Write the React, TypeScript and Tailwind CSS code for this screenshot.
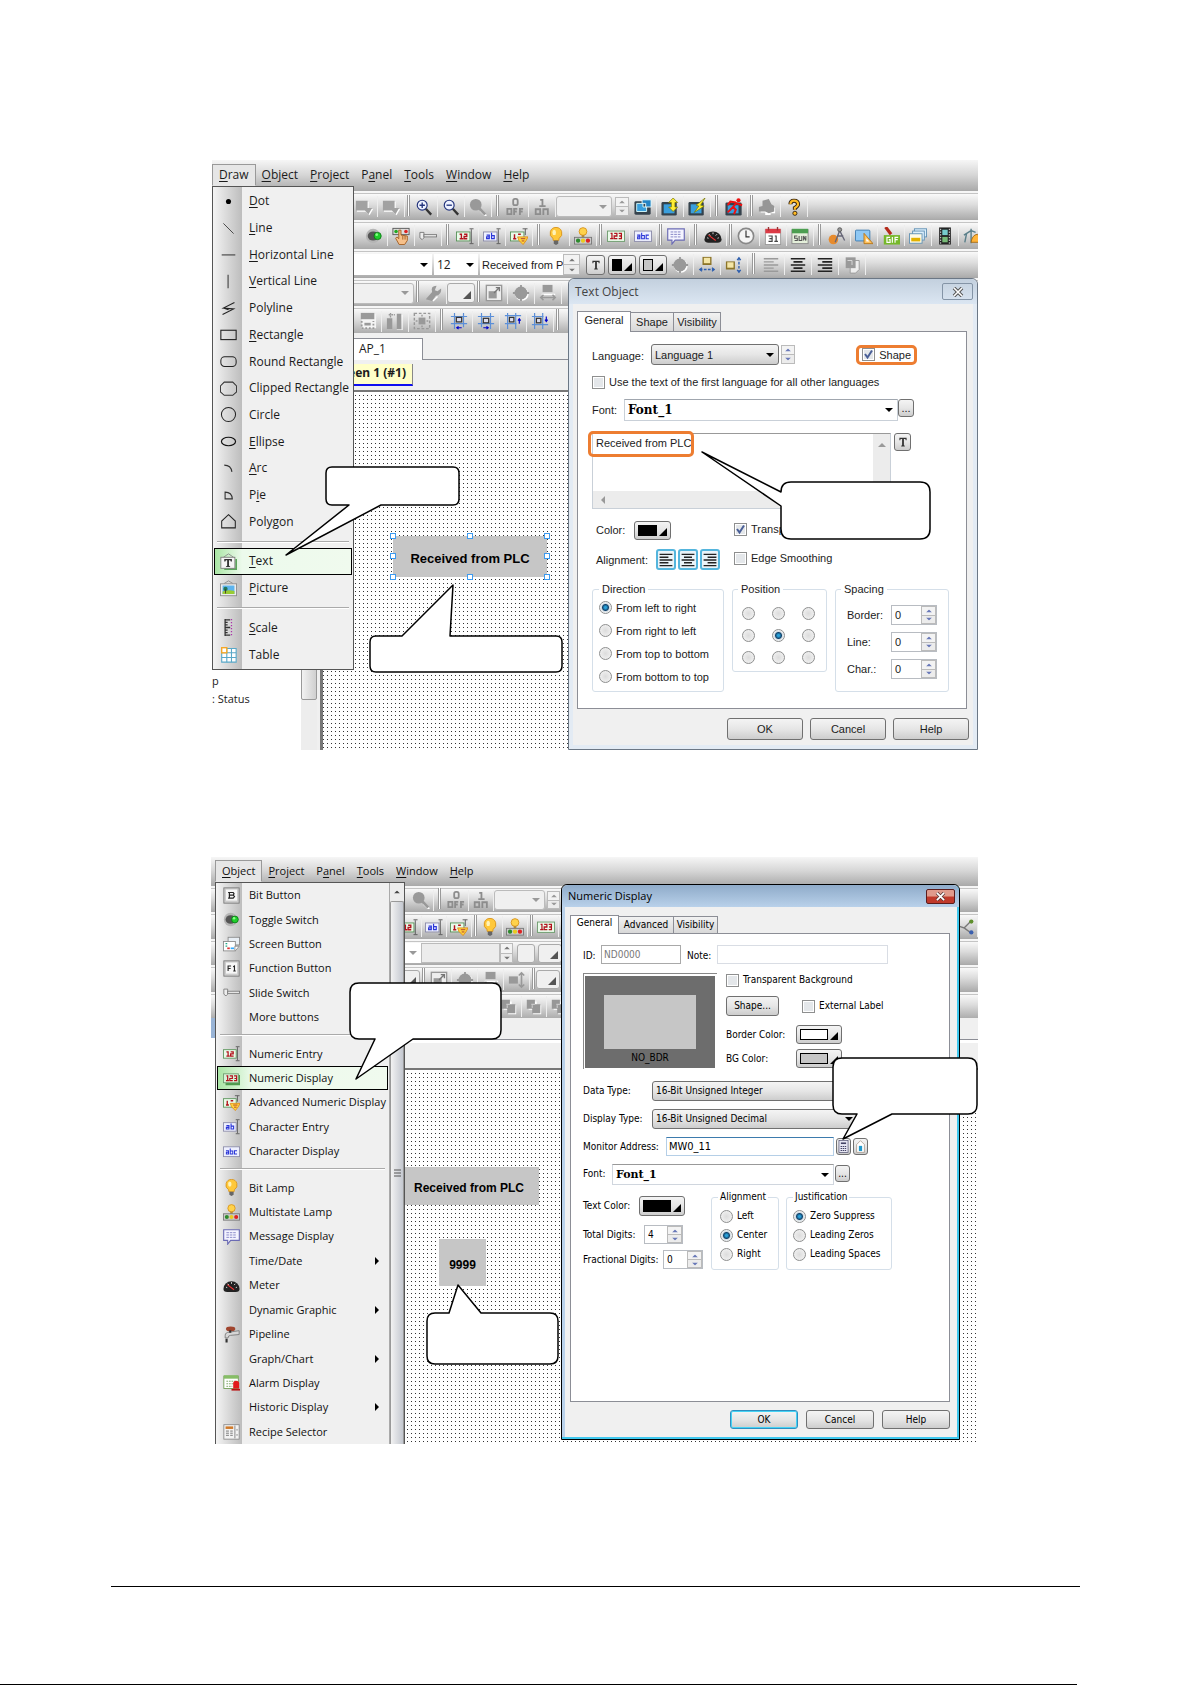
import React from "react";

/* ---------- icons ---------- */

const glyphs: Record<string, React.ReactNode> = {
  dot: <circle cx="10" cy="10" r="3" fill="#000" />,
  line: <path d="M4 4 16 16" stroke="#333" />,
  hline: <path d="M2 10.5H18" stroke="#333" strokeWidth="1.2" />,
  vline: <path d="M9.500 2V18" stroke="#333" strokeWidth="1.2" />,
  polyline: <path d="M17 3 4 9.500 16 10.500 3 17M4 9.500 10 11.500" fill="none" stroke="#222" strokeWidth="1.300" />,
  rect: <rect x="1" y="5" width="18" height="11" fill="none" stroke="#222" strokeWidth="1.300" />,
  roundrect: <rect x="1" y="4.500" width="18" height="11.500" rx="4.500" fill="none" stroke="#222" strokeWidth="1.200" />,
  clipped: <path d="M5 2.500H15L19.500 7V14L15 18H5L.5 14V7Z" fill="none" stroke="#333" strokeWidth="1.200" />,
  circle: <circle cx="10" cy="10" r="8.300" fill="none" stroke="#222" strokeWidth="1.200" />,
  ellipse: <ellipse cx="10" cy="10" rx="8.300" ry="5" fill="none" stroke="#111" strokeWidth="1.400" />,
  arc: <path d="M5 6Q13 6 14 14" fill="none" stroke="#333" strokeWidth="1.300" />,
  pie: <path d="M6 6Q14 6 14.500 14H6Z" fill="none" stroke="#333" strokeWidth="1.300" />,
  polygon: <path d="M10 2 18 9.500V17.500H2V9.500Z" fill="none" stroke="#222" strokeWidth="1.200" />,
  text: (
    <g>
      <path d="M18 7H20V20H5V18H18Z" fill="#5aa55a" />
      <path d="M4 5 10 1 16 5" fill="none" stroke="#888" />
      <rect x="1" y="5" width="16.500" height="13" fill="#f4f4f4" stroke="#777" />
      <path d="M5 7H14V10H12.700L12 8.500H10.600V15L12 15.800V16.600H7V15.800L8.400 15V8.500H7L6.300 10H5Z" fill="#333" />
    </g>
  ),
  picture: (
    <g>
      <path d="M5 4 10 1 15 4" fill="none" stroke="#888" />
      <rect x=".5" y="4.500" width="19" height="14" fill="#eee" stroke="#888" />
      <rect x="3" y="6.500" width="14" height="10" fill="#5db4ee" />
      <path d="M3 13.500Q10 11 17 13V16.500H3Z" fill="#9c3" />
      <circle cx="6.500" cy="10.500" r="2.500" fill="#275" />
      <path d="M6 11H7V16H6Z" fill="#432" />
    </g>
  ),
  scale: (
    <g stroke="#333" strokeWidth="1.500">
      <path d="M6 0V20M6 1H12M6 4H9M6 7H9M6 10H12M6 13H9M6 16H9M6 19H12" />
      <path d="M13.500 0V20" stroke="#a3a" strokeDasharray="1.500 2" />
    </g>
  ),
  table: (
    <g>
      <path d="M2 3H19V19H2Z" fill="#fff" stroke="#59a8c8" strokeWidth="1.300" />
      <path d="M8 3V19M13.500 3V19M2 8H19M2 13.500H19" stroke="#59a8c8" strokeWidth="1.300" />
      <rect x="2" y="2" width="6" height="6" fill="#fff" stroke="#f5a623" strokeWidth="1.600" />
    </g>
  ),
  zoomin: (
    <g>
      <path d="M12 12 18 18.500" stroke="#333" strokeWidth="2.600" />
      <circle cx="8" cy="8" r="5.500" fill="#eef2ff" stroke="#24357e" strokeWidth="1.300" />
      <path d="M8 5V11M5 8H11" stroke="#24357e" strokeWidth="1.500" />
    </g>
  ),
  zoomout: (
    <g>
      <path d="M12 12 18 18.500" stroke="#333" strokeWidth="2.600" />
      <circle cx="8" cy="8" r="5.500" fill="#eef2ff" stroke="#24357e" strokeWidth="1.300" />
      <path d="M5 8H11" stroke="#24357e" strokeWidth="1.500" />
    </g>
  ),
  zoomgray: (
    <g>
      <path d="M13 14 19 20" stroke="#fff" strokeWidth="2.500" />
      <path d="M11 11 18 18.500" stroke="#999" strokeWidth="3" />
      <circle cx="7.500" cy="7.500" r="6.500" fill="#999" />
    </g>
  ),
  off: (
    <g fill="none" stroke="#8d8d8d" strokeWidth="2">
      <rect x="8" y="1" width="5" height="7" rx="2" />
      <path d="M1.500 12H6V18H1.500ZM9 19V12H12.500M9 15H12M15.500 19V12H19M15.500 15H18.500" />
    </g>
  ),
  on: (
    <g fill="none" stroke="#8d8d8d" strokeWidth="2">
      <path d="M8 2H10.500V9M7 9H14M3 12.500H8V18H3ZM11.500 19V12.500H16.500V19" />
    </g>
  ),
  grayA: (
    <g>
      <path d="M1 3H14V11H19L15 18 11 14H1Z" fill="#fff" transform="translate(1.200 1.200)" />
      <path d="M1 3H14V11H19L15 18 11 14H1Z" fill="#a2a2a2" />
    </g>
  ),
  grayB: (
    <g>
      <rect x="3" y="2" width="16" height="16" fill="#f4f4f4" />
      <rect x="2" y="1" width="15" height="7" fill="#999" />
      <path d="M3 10V18H16V10" stroke="#999" strokeWidth="2" strokeDasharray="2 2" fill="none" />
      <path d="M6 12H13V15H6Z" fill="#999" />
    </g>
  ),
  grayC: (
    <g fill="#999">
      <path d="M1 7H7V19H1ZM12 2H17V19H12Z" />
      <path d="M3 3H10M5 1V6" stroke="#999" strokeDasharray="2 1" strokeWidth="1.500" />
      <path d="M18 3V20H12" fill="none" stroke="#fff" />
    </g>
  ),
  grayD: (
    <g fill="none" stroke="#999" strokeWidth="1.600">
      <rect x="1.500" y="1.500" width="17" height="17" strokeDasharray="3 2" />
      <rect x="7" y="7" width="6" height="6" fill="#999" />
      <path d="M10 3V17M3 10H17" strokeDasharray="2 2" />
    </g>
  ),
  grayE: (
    <g>
      <rect x="1.500" y="1.500" width="17" height="17" fill="#eee" stroke="#999" strokeWidth="1.500" />
      <rect x="4" y="8" width="9" height="8" fill="#999" />
      <path d="M10 10 16 4M12 4H16V8" stroke="#777" fill="none" strokeWidth="1.500" />
    </g>
  ),
  grayCircle: (
    <g>
      <circle cx="11" cy="11" r="7.500" fill="#fff" />
      <circle cx="10" cy="10" r="7.200" fill="#999" />
      <path d="M10 1V19M1 10H19" stroke="#999" strokeWidth="2" />
    </g>
  ),
  grayW: (
    <g>
      <rect x="4" y="1" width="11" height="8" fill="#999" />
      <path d="M3 11.500H18" stroke="#fff" strokeWidth="1.500" />
      <path d="M2 15H18M5 12 2 15 5 18M15 12 18 15 15 18" fill="none" stroke="#999" strokeWidth="1.800" />
    </g>
  ),
  grayH: (
    <g>
      <rect x="1" y="6" width="10" height="8" fill="#999" />
      <path d="M15 2V18M12 5 15 2 18 5M12 15 15 18 18 15" fill="none" stroke="#999" strokeWidth="1.800" />
    </g>
  ),
  graySq: (
    <g>
      <path d="M3 3H12V7H17V17H8V12H3Z" fill="#fff" transform="translate(1 1)" />
      <path d="M2 2H11V7H17V17H8V12H2Z" fill="#979797" />
      <path d="M7 7H11M8 8V11" stroke="#ddd" />
    </g>
  ),
  wrench: (
    <g>
      <path d="M2 17 9 9Q7 2 14 2L12 7 15 8 19 5Q20 12 13 13L9 19Z" fill="#999" />
      <path d="M10 19 15 14" stroke="#fff" strokeWidth="1.500" />
    </g>
  ),
  screens: (
    <g>
      <rect x=".5" y="3.500" width="18" height="15" rx="1.500" fill="#35424c" />
      <path d="M3 6H10V10H14V15H3Z" fill="#3a9fdd" stroke="#dff" />
      <path d="M9 2H19V10H13V6H9Z" fill="#2383c4" stroke="#eff" />
    </g>
  ),
  screenUp: (
    <g>
      <rect x=".5" y="4.500" width="17" height="15" rx="1.500" fill="#35424c" />
      <rect x="3" y="7" width="12" height="10" fill="#3a9fdd" />
      <path d="M13.500 0 18.500 5H15.500V10H18.500L13.500 15 8.500 10H11.500V5H8.500Z" fill="#fe3" stroke="#770" strokeWidth=".8" />
    </g>
  ),
  screenFlash: (
    <g>
      <rect x=".5" y="4.500" width="17" height="15" rx="1.500" fill="#35424c" />
      <rect x="3" y="7" width="12" height="10" fill="#3a9fdd" />
      <path d="M19 0 9 8 12 9 7 16 18 9 14 8Z" fill="#fe3" stroke="#770" strokeWidth=".8" />
    </g>
  ),
  run: (
    <g>
      <rect x=".5" y="5" width="18" height="14.500" rx="1.500" fill="#35424c" />
      <rect x="3" y="8" width="12" height="9" fill="#3a9fdd" />
      <circle cx="15" cy="2.500" r="2.300" fill="#e11" />
      <path d="M13 5 9 10 12 13 10 18M9 10 3 16M13 6 19 8M12 5 6 4 3 8" stroke="#e11" strokeWidth="2.200" fill="none" />
    </g>
  ),
  printer: (
    <g>
      <path d="M2 11 6 9V4L12 2 15 8 18 10V16H13V18H7V15H2Z" fill="#fff" transform="translate(1 1)" />
      <path d="M1 10 5 9V3L12 1 15 7 18 9V15L12 17 8 15H1Z" fill="#969696" />
    </g>
  ),
  help: (
    <g>
      <path d="M6 7Q6 3 10 3 14.500 3 14.500 7 14.500 9 11 11V13" fill="none" stroke="#321" strokeWidth="4.500" />
      <path d="M6 7Q6 3 10 3 14.500 3 14.500 7 14.500 9 11 11V13" fill="none" stroke="#fb2" strokeWidth="2.400" />
      <circle cx="11" cy="17" r="2.300" fill="#fb2" stroke="#321" />
    </g>
  ),
  toggle: (
    <g>
      <circle cx="9" cy="10" r="8" fill="#b5b5b5" />
      <ellipse cx="9" cy="10" rx="6" ry="5" fill="#555" />
      <circle cx="14" cy="10" r="4" fill="#1fce2b" stroke="#0a7a14" />
      <circle cx="13" cy="8.500" r="1.500" fill="#8f8" />
    </g>
  ),
  hand: (
    <g>
      <rect x="1" y="1.500" width="18" height="7" fill="#ddd" stroke="#555" />
      <circle cx="4.500" cy="5" r="2" fill="#2a2" />
      <circle cx="15.500" cy="5" r="2" fill="#d22" />
      <path d="M7.500 3.500H10V9L17 10V15L14 19.500H8L4 12.500 5.500 11 7.500 13Z" fill="#f6c08a" stroke="#a05a1e" />
      <path d="M12 10V14M14.500 10V14" stroke="#a05a1e" />
    </g>
  ),
  slide: (
    <g fill="#eee" stroke="#777">
      <path d="M1 6H5.500V12L3.500 14 1 12Z" />
      <rect x="5.500" y="8.500" width="14" height="2.500" />
    </g>
  ),
  numEntry: (
    <g>
      <rect x=".5" y="5.500" width="15" height="10" fill="#eafbea" stroke="#579157" />
      <path d="M4 8H6V13M4 13H8M9 8H12V10.500H9V13H12.500" fill="none" stroke="#b3121d" strokeWidth="1.500" />
      <path d="M17 2.500V18M15 2H19.500M15 18.500H19.500" stroke="#555" />
    </g>
  ),
  numDisplay: (
    <g>
      <rect x=".5" y="4.500" width="19" height="11.500" fill="#eafbea" stroke="#6c9a6c" />
      <path d="M4 7H5.500V13M3.500 13H7M8 7H11V10H8V13H11.500M13 7H16V13H13M13.500 10H16" fill="none" stroke="#b3121d" strokeWidth="1.400" />
    </g>
  ),
  numDisplayHot: (
    <g>
      <path d="M18 6H20V18H3V15H18Z" fill="#4e9a4e" />
      <rect x=".5" y="4.500" width="17.500" height="10.500" fill="#d8f3d8" stroke="#6c9a6c" />
      <path d="M4 7H5.500V12.500M3.500 12.500H7M8 7H11V10H8V12.500H11.500M13 7H16V12.500H13M13.500 10H16" fill="none" stroke="#b3121d" strokeWidth="1.400" />
    </g>
  ),
  advNum: (
    <g>
      <rect x=".5" y="5.500" width="15" height="10" fill="#eafbea" stroke="#579157" />
      <path d="M5 8V13M3.500 13H7M9 8H12" fill="none" stroke="#b3121d" strokeWidth="1.600" />
      <path d="M17 2V9M14 2H19.500" stroke="#555" />
      <path d="M8.500 11H20L18 15 14.500 19.500 10 15Z" fill="#ffd43b" stroke="#e08a1a" />
      <path d="M12 13H17M13 15.500H16" stroke="#a33" />
    </g>
  ),
  ab: (
    <g>
      <rect x=".5" y="5.500" width="15" height="10" fill="#eef0ff" stroke="#8a8aa8" />
      <path d="M4 9H7V13H4V11H7M9.500 6.500V13H12.500V9.500H9.500" fill="none" stroke="#2b36d8" strokeWidth="1.300" />
      <path d="M17 2.500V18M15 2H19.500M15 18.500H19.500" stroke="#555" />
    </g>
  ),
  abc: (
    <g>
      <rect x=".5" y="4.500" width="19" height="11.500" fill="#eef0ff" stroke="#8a8aa8" />
      <path d="M3.500 9H6.500V13H4V11H6.500M8.500 6.500V13H11.500V9.500H8.500M16.500 9H13.500V13H16.500" fill="none" stroke="#2b36d8" strokeWidth="1.200" />
    </g>
  ),
  lamp: (
    <g>
      <path d="M10 .5A6.500 6.500 0 0 1 13.500 12.500L13 15H7L6.500 12.500A6.500 6.500 0 0 1 10 .5Z" fill="#ffc83a" stroke="#d8931a" />
      <ellipse cx="8" cy="6" rx="2" ry="3" fill="#fff3b8" />
      <path d="M7.500 15H12.500V18.500L10 20 7.500 18.500Z" fill="#666" />
    </g>
  ),
  multi: (
    <g>
      <circle cx="10" cy="5" r="4.300" fill="#ffd24a" stroke="#d8931a" />
      <path d="M8.500 9H11.500V12H8.500Z" fill="#b98a30" />
      <rect x=".5" y="11.500" width="19" height="7.500" fill="#ccc" stroke="#777" />
      <circle cx="4.500" cy="15.200" r="2.400" fill="#2d8a2d" />
      <circle cx="10" cy="15.200" r="2.400" fill="#eaca20" />
      <circle cx="15.500" cy="15.200" r="2.400" fill="#d22" />
    </g>
  ),
  msg: (
    <g>
      <path d="M.8 2H19.200V14.500H9L5.500 19V14.500H.8Z" fill="#f4f4ff" stroke="#6b6bb4" strokeWidth="1.300" />
      <path d="M4 5.500H16M4 8.200H16M4 11H16" stroke="#7a7ac0" strokeDasharray="3 1" />
    </g>
  ),
  meter: (
    <g>
      <path d="M.5 14A9.500 9 0 0 1 19.500 14Q19.500 17.500 15 17.500H5Q.5 17.500 .5 14Z" fill="#222" />
      <path d="M3.500 12 5 12.500M5.500 8 7 9.500M10 6V8M14.500 8 13 9.500M16.500 12 15 12.500" stroke="#eee" />
      <path d="M5 9 13 15" stroke="#e33" strokeWidth="1.200" />
    </g>
  ),
  clock: (
    <g>
      <circle cx="10" cy="10" r="8.500" fill="#f5f5f5" stroke="#888" strokeWidth="1.800" />
      <path d="M10 4V11H14" fill="none" stroke="#333" strokeWidth="1.300" />
    </g>
  ),
  cal: (
    <g>
      <rect x="1.500" y="3" width="17" height="16.500" fill="#fff" stroke="#999" />
      <rect x="1.500" y="2" width="17" height="5" fill="#dc3b46" />
      <path d="M5 0V4M15 0V4" stroke="#933" strokeWidth="1.500" />
      <path d="M5 10H9V16H5M6 13H9M12 10H13.500V16M11.500 16H15.500" fill="none" stroke="#444" strokeWidth="1.300" />
    </g>
  ),
  sun: (
    <g>
      <rect x="1" y="3" width="18" height="15.500" fill="#e4efda" stroke="#888" />
      <rect x="1" y="2" width="18" height="5" fill="#4c9e50" />
      <path d="M7 10H4V12.500H7V15H4M9 10V15H12V10M14 15V10L16.500 15V10" fill="none" stroke="#555" strokeWidth="1.200" />
    </g>
  ),
  compass: (
    <g>
      <circle cx="6" cy="14" r="5.300" fill="#e78b2d" />
      <path d="M13 4 8 17M13 4 18.500 15M10 10H17" fill="none" stroke="#667" strokeWidth="1.500" />
      <circle cx="13" cy="3" r="2.200" fill="#999" stroke="#555" />
    </g>
  ),
  draw: (
    <g>
      <rect x=".5" y="3.500" width="16" height="12" rx="1" fill="#8fc8f4" stroke="#3878b0" />
      <path d="M10 7V18.500H20Z" fill="#ffc15a" stroke="#b37418" />
      <path d="M12.500 12.500V16H16Z" fill="#fff" />
    </g>
  ),
  gif: (
    <g>
      <path d="M4 0 10 8" stroke="#b42a1a" strokeWidth="3.500" />
      <rect x="2" y="9" width="18" height="10.500" fill="#76b82a" />
      <path d="M9 11.500H5.500V17H9V14H7.500M11.500 11V17.500M14.500 17.500V11.500H18M14.500 14H17.500" fill="none" stroke="#fff" strokeWidth="1.300" />
    </g>
  ),
  photos: (
    <g>
      <rect x="6" y="2" width="13.500" height="9" fill="#dceffc" stroke="#5e8fb3" />
      <rect x="4" y="4.500" width="13" height="10" fill="#dceffc" stroke="#5e8fb3" />
      <rect x=".5" y="7.500" width="14" height="10.500" fill="#fffbe6" stroke="#5e8fb3" />
      <path d="M2.500 12H12.500V16H2.500Z" fill="#e2b200" />
    </g>
  ),
  film: (
    <g>
      <rect x="3.500" y=".5" width="13" height="19" fill="#222" />
      <rect x="7" y="3" width="6" height="6" fill="#7cc" />
      <rect x="7" y="11" width="6" height="6" fill="#7b7" />
      <path d="M5.200 2V19M14.800 2V19" stroke="#fff" strokeDasharray="1.500 1.500" />
    </g>
  ),
  tools: (
    <g>
      <path d="M1 9 9 4 14 6M9 2V18M4 7 2 17" stroke="#5a7f8a" strokeWidth="1.600" fill="none" />
      <path d="M9 17Q10 9 16 8L19 12V17Z" fill="#ffb43a" stroke="#a66a10" />
    </g>
  ),
  net: (
    <g>
      <path d="M3 9 9 11 17 3M9 11 17 17" stroke="#777" fill="none" strokeWidth="1.500" />
      <circle cx="17" cy="4" r="2.400" fill="#5f8f2e" />
      <circle cx="17" cy="16" r="2.400" fill="#3a5fae" />
    </g>
  ),
  boxW: (
    <g>
      <rect x="5" y="1" width="10" height="9" fill="#8c7428" />
      <rect x="6.500" y="2" width="7" height="6" fill="#f4e6a6" />
      <path d="M2 15H18" stroke="#2d5eae" strokeDasharray="3 1.500" strokeWidth="1.500" />
      <path d="M4.500 13 2 15 4.500 17M15.500 13 18 15 15.500 17" fill="none" stroke="#2d5eae" strokeWidth="1.400" />
    </g>
  ),
  boxH: (
    <g>
      <rect x="1" y="6" width="10" height="9" fill="#8c7428" />
      <rect x="2.500" y="7" width="7" height="6" fill="#f4e6a6" />
      <path d="M15.500 2V18" stroke="#2d5eae" strokeDasharray="3 1.500" strokeWidth="1.500" />
      <path d="M13.500 4.500 15.500 2 17.500 4.500M13.500 15.500 15.500 18 17.500 15.500" fill="none" stroke="#2d5eae" strokeWidth="1.400" />
    </g>
  ),
  alignLeft: <path d="M2 3H18M2 6.500H13M2 10H18M2 13.500H13M2 17H18" stroke="#9a9a9a" strokeWidth="1.600" />,
  alignCenter: <path d="M2 3H18M5 6.500H15M2 10H18M5 13.500H15M2 17H18" stroke="#222" strokeWidth="1.800" />,
  alignRight: <path d="M2 3H18M7 6.500H18M2 10H18M7 13.500H18M2 17H18" stroke="#222" strokeWidth="1.800" />,
  alignLeftDark: <path d="M2 3H18M2 6.500H13M2 10H18M2 13.500H13M2 17H18" stroke="#222" strokeWidth="1.800" />,
  pages: (
    <g>
      <path d="M8 5H18V15L14 19H8Z" fill="#eee" stroke="#999" />
      <rect x="3" y="1.500" width="11" height="12" fill="#999" />
      <path d="M5 5H10V10" stroke="#ddd" fill="none" />
    </g>
  ),
  gridL: (
    <g>
      <path d="M5 1V19M15 1V17M1 5H19M1 13H19" stroke="#5b8fd8" strokeWidth="1.300" />
      <rect x="7" y="6" width="6" height="5" fill="#dde" stroke="#333" strokeWidth="1.400" />
      <path d="M13 17.500H8M9.500 16 7.500 17.500 9.500 19" fill="none" stroke="#00c" strokeWidth="1.300" />
    </g>
  ),
  gridR: (
    <g>
      <path d="M5 1V17M15 1V19M1 5H19M1 13H19" stroke="#5b8fd8" strokeWidth="1.300" />
      <rect x="7" y="7" width="6" height="5" fill="#dde" stroke="#333" strokeWidth="1.400" />
      <path d="M7 17.500H12M10.500 16 12.500 17.500 10.500 19" fill="none" stroke="#00c" strokeWidth="1.300" />
    </g>
  ),
  gridU: (
    <g>
      <path d="M4 1V19M13 1V19M1 4H19M1 13H14" stroke="#5b8fd8" strokeWidth="1.300" />
      <rect x="6" y="6" width="5" height="5" fill="#dde" stroke="#333" strokeWidth="1.400" />
      <path d="M17 13V8M15.500 9.500 17 7.500 18.500 9.500" fill="none" stroke="#00c" strokeWidth="1.300" />
    </g>
  ),
  gridD: (
    <g>
      <path d="M4 1V19M13 1V19M1 5H14M1 14H19" stroke="#5b8fd8" strokeWidth="1.300" />
      <rect x="6" y="7" width="5" height="5" fill="#dde" stroke="#333" strokeWidth="1.400" />
      <path d="M17 5V10M15.500 8.500 17 10.500 18.500 8.500" fill="none" stroke="#00c" strokeWidth="1.300" />
    </g>
  ),
  bitButton: (
    <g>
      <rect x="1" y="1" width="18" height="18" fill="#ccc" stroke="#777" />
      <rect x="3.500" y="3" width="13" height="13" fill="#f6f6f6" />
      <path d="M7.500 6.500V13M6 6.500H12L13 8 12 9.600H7.500M12 9.600 13.500 11.300 12 13H6" fill="none" stroke="#222" strokeWidth="1.400" />
    </g>
  ),
  fnButton: (
    <g>
      <rect x="1" y="1" width="18" height="18" fill="#ccc" stroke="#777" />
      <rect x="3.500" y="3" width="13" height="13" fill="#f6f6f6" />
      <path d="M6 13V7H9.500M6 10H9M12 8 13.500 7V13M12 13H15" fill="none" stroke="#222" strokeWidth="1.300" />
    </g>
  ),
  screenButton: (
    <g>
      <rect x="6" y="1.500" width="13.500" height="9" fill="#e8eef4" stroke="#888" />
      <rect x=".5" y="6.500" width="14" height="11" fill="#fff" stroke="#888" />
      <path d="M3 9H5M3 12H5" stroke="#2a8" strokeWidth="1.500" />
      <path d="M5 14.500H8" stroke="#d33" strokeWidth="2" />
      <path d="M9 14.500H13" stroke="#3af" strokeWidth="2" />
      <path d="M14 12H19L15 17H14Z" fill="#fff" stroke="#888" />
    </g>
  ),
  pipeline: (
    <g>
      <ellipse cx="9" cy="3.500" rx="5.500" ry="2.800" fill="#a0452e" />
      <path d="M3 9Q5 7 9 7L19 5.500V10L9 11Q6 11 6 14H2.500Q2.500 10 3 9Z" fill="#d6d6d6" stroke="#777" />
      <path d="M8.500 5V8M4.200 15V19.500" stroke="#333" strokeWidth="2.500" />
    </g>
  ),
  alarm: (
    <g>
      <rect x="1" y="2.500" width="17" height="14.500" fill="#fff" stroke="#6b9a4f" />
      <rect x="1" y="1.500" width="17" height="4" fill="#86bd66" />
      <path d="M4 8.500H15M4 11.500H12M4 14.500H11" stroke="#6b9a4f" strokeDasharray="2 1" />
      <path d="M12 17V11Q12 8 15.500 8 19 8 19 11V17Z" fill="#e31b1b" />
      <path d="M10 18.500H20" stroke="#b11" strokeWidth="2" />
    </g>
  ),
  recipe: (
    <g>
      <rect x="1" y="2" width="18" height="17" fill="#f3f3f3" stroke="#888" />
      <rect x="3" y="4" width="9" height="3" fill="#cf7a2a" />
      <path d="M3.500 9.500H7M3.500 12H7M3.500 14.500H7M8.500 9.500H11.500M8.500 12H11.500M8.500 14.500H11.500" stroke="#666" />
      <path d="M14 3V18M16.500 7V9M16.500 13V15" stroke="#777" />
    </g>
  ),
  keypad: (
    <g>
      <rect x="3" y="1" width="14" height="18" fill="#e8e8f4" stroke="#446" />
      <path d="M6 5H14" stroke="#446" strokeWidth="2.500" />
      <path d="M5.500 10H14.500M5.500 13H14.500M5.500 16H14.500" stroke="#446" strokeWidth="1.600" strokeDasharray="2.200 1" />
    </g>
  ),
  tag: (
    <g>
      <path d="M4 19V7L10 1 16 7V19Z" fill="#fff" stroke="#987" />
      <path d="M7.500 9H12.500V17H7.500Z" fill="#29c" />
    </g>
  ),
  T: <path d="M4 3H16V7H14.500L14 5H11.500V15.500L13 16.200V17.500H7V16.200L8.500 15.500V5H6L5.500 7H4Z" fill="#333" />,
};

function Icon({ name, className = "size-[18px]" }: { name: string; className?: string }) {
  return (
    <svg viewBox="0 0 20 20" className={`shrink-0 ${className}`} aria-hidden="true">
      {glyphs[name]}
    </svg>
  );
}

const Arrow = ({ up = false, className = "text-black" }: { up?: boolean; className?: string }) => (
  <svg viewBox="0 0 8 4" className={`h-1 w-2 ${className}`} aria-hidden="true">
    <path d={up ? "M0 4 4 0 8 4Z" : "M0 0H8L4 4Z"} fill="currentColor" />
  </svg>
);

/* ---------- form controls ---------- */

function Check({ label, checked = false }: { label: string; checked?: boolean }) {
  return (
    <label className="flex items-center gap-1 whitespace-nowrap">
      <span className="grid size-[13px]">
        <input
          type="checkbox"
          defaultChecked={checked}
          className="peer size-[13px] appearance-none border border-[#8e8f8f] bg-[#e4e7ea] shadow-[inset_0_0_0_1px_#fff] [grid-area:1/1]"
        />
        <svg viewBox="0 0 13 13" className="pointer-events-none hidden size-[13px] peer-checked:block [grid-area:1/1]" aria-hidden="true">
          <path d="M3 6 5.500 9.500 10 2.500" fill="none" stroke="#4a5f97" strokeWidth="2" />
        </svg>
      </span>
      {label}
    </label>
  );
}

const radioFace =
  "size-[13px] appearance-none rounded-full border border-[#8e8f8f] bg-[radial-gradient(#dcdcdc,#f6f6f6)] checked:bg-[radial-gradient(#2aa0d8_1px,#12456e_3px,#d5dde3_4px,#fff_6px)]";

function Radio({ name, label, checked = false }: { name: string; label: string; checked?: boolean }) {
  return (
    <label className="flex items-center gap-1 whitespace-nowrap">
      <input type="radio" name={name} defaultChecked={checked} className={radioFace} />
      {label}
    </label>
  );
}

function Spin({ className = "h-full w-[14px]", tone = "text-[#6878b8]", label }: { className?: string; tone?: string; label: string }) {
  return (
    <span className={`flex flex-col ${className}`}>
      <button aria-label={`${label} up`} className="flex min-h-0 flex-1 items-center justify-center border border-[#bbb] bg-[#f3f3f3]">
        <Arrow up className={`${tone} scale-75`} />
      </button>
      <button aria-label={`${label} down`} className="flex min-h-0 flex-1 items-center justify-center border border-t-0 border-[#bbb] bg-[#ececec]">
        <Arrow className={`${tone} scale-75`} />
      </button>
    </span>
  );
}

function NumberBox({ label, value, className }: { label: string; value: string; className: string }) {
  return (
    <span className={`flex border border-[#b8bcc2] bg-white ${className}`}>
      <input aria-label={label} defaultValue={value} className="w-0 min-w-0 flex-1 pl-[3px]" />
      <Spin label={label} className="w-[15px]" />
    </span>
  );
}

function Combo({ label, value, className, arrow = "text-black" }: { label: string; value: string; className: string; arrow?: string }) {
  return (
    <span className={`grid items-center ${className}`}>
      <select aria-label={label} className="h-full w-full appearance-none truncate pl-[3px] [grid-area:1/1]">
        <option>{value}</option>
      </select>
      <span className="pointer-events-none mr-1 justify-self-end [grid-area:1/1]">
        <Arrow className={arrow} />
      </span>
    </span>
  );
}

const face = "border border-[#707070] rounded-[3px] bg-linear-to-b from-[#f4f4f4] via-[#e6e6e6] to-[#cdcdcd]";

function Swatch({ label, className, color }: { label: string; className: string; color: string }) {
  return (
    <button aria-label={label} className={`flex items-end justify-between p-[3px] ${face} ${className}`}>
      <span className={`h-full flex-1 border border-black ${color}`} />
      <svg viewBox="0 0 8 8" className="ml-[2px] size-2" aria-hidden="true">
        <path d="M8 0V8H0Z" fill="#000" />
      </svg>
    </button>
  );
}

function Push({ children, className }: { children: React.ReactNode; className: string }) {
  return <button className={`${face} ${className}`}>{children}</button>;
}

function Tabs({ items, className }: { items: [string, string][]; className: string }) {
  return (
    <div role="tablist" className={`flex items-end ${className}`}>
      {items.map(([t, w], i) => (
        <button
          key={t}
          role="tab"
          aria-selected={i === 0}
          className={
            i === 0
              ? `z-10 -mb-px h-full border border-b-0 border-[#8c8e96] bg-white pb-1 ${w}`
              : `h-[calc(100%-2px)] border border-b-0 border-l-0 border-[#8c8e96] bg-linear-to-b from-[#f2f2f2] to-[#d8d8d8] ${w}`
          }
        >
          {t}
        </button>
      ))}
    </div>
  );
}

/* ---------- menus ---------- */

function Mnemonic({ text }: { text: string }) {
  const at = text.indexOf("&");
  if (at < 0) return <>{text}</>;
  return (
    <>
      {text.slice(0, at)}
      <u className="underline-offset-2">{text[at + 1]}</u>
      {text.slice(at + 2)}
    </>
  );
}

type Item = { t: string; icon?: string; hot?: boolean; sub?: boolean } | "-";

function MenuItems({ items, sep, gap }: { items: Item[]; sep: string; gap: string }) {
  return (
    <>
      {items.map((it, i) =>
        it === "-" ? (
          <div key={i} className={`flex shrink-0 items-center pr-1 pl-1 ${sep}`}>
            <div className="h-[2px] flex-1 border-b border-white bg-[#aaa]" />
          </div>
        ) : (
          <button
            key={i}
            role="menuitem"
            className={`mx-px flex min-h-0 flex-1 items-center border text-left whitespace-nowrap ${
              it.hot ? "border-black bg-linear-to-r from-[#a9e5a4] from-0% via-[#ecfaec] via-20% to-[#f0faee]" : "border-transparent"
            }`}
          >
            <span className="flex w-[26px] shrink-0 justify-center">{it.icon && <Icon name={it.icon} className="size-[17px]" />}</span>
            <span className={`flex-1 ${gap}`}>
              <Mnemonic text={it.t} />
            </span>
            {it.sub && (
              <svg viewBox="0 0 4 8" className="mr-2 h-2 w-1" aria-hidden="true">
                <path d="M0 0 4 4 0 8Z" />
              </svg>
            )}
          </button>
        ),
      )}
    </>
  );
}

function MenuBar({ items, className, pad }: { items: string[]; className: string; pad: string }) {
  return (
    <nav className={`flex items-center bg-linear-to-b from-[#f6f6f6] via-[#d6d6d6] to-[#acacac] ${className}`}>
      {items.map((t, i) => (
        <button key={t} className={`h-[22px] border ${i === 0 ? "border-[#999] border-b-transparent bg-[#e6e6e6] px-[6px]" : `border-transparent ${pad}`}`}>
          <Mnemonic text={t} />
        </button>
      ))}
    </nav>
  );
}

/* ---------- tool bars ---------- */

function ToolRow({ children, className }: { children?: React.ReactNode; className: string }) {
  return (
    <div className={`flex shrink-0 items-center overflow-hidden border-t border-[#aaa] bg-linear-to-b from-[#fafafa] from-10% via-[#dcdcdc] to-[#adadad] shadow-[inset_0_2px_0_#f6f6f6,inset_0_3px_0_#c4c4c4] ${className}`}>
      {children}
    </div>
  );
}

function Tools({ list, size }: { list: string; size: string }) {
  return (
    <>
      {list.split(" ").map((n, i) =>
        n === "|" || n === "||" ? (
          <span key={i} className={`flex shrink-0 justify-center ${n === "|" ? "w-[6px]" : "w-[10px]"}`}>
            <span className="h-[21px] w-[3px] border-x border-[#999] bg-white" />
          </span>
        ) : (
          <button key={i} aria-label={n} className={`mt-[3px] flex h-[21px] shrink-0 items-center justify-center border-r border-[#eee] ${size}`}>
            <Icon name={n} className="size-[18px]" />
          </button>
        ),
      )}
    </>
  );
}

const PenBox = ({ className }: { className: string }) => (
  <button aria-label="Pen colour" className={`mt-[3px] flex shrink-0 items-end justify-end rounded-[3px] border border-[#aaa] bg-[#f0f0f0] p-[3px] ${className}`}>
    <svg viewBox="0 0 8 8" className="size-2" aria-hidden="true">
      <path d="M8 0V8H0Z" fill="#555" />
    </svg>
  </button>
);

/* ---------- call-outs ---------- */

function Callout({ className, box, d }: { className: string; box: string; d: string }) {
  return (
    <svg viewBox={box} className={`absolute overflow-visible ${className}`} aria-hidden="true">
      <path d={d} fill="#fff" stroke="#000" strokeWidth="1.500" strokeLinejoin="round" />
    </svg>
  );
}

const dots =
  "bg-[linear-gradient(#fff_3px,transparent_3px),linear-gradient(90deg,#333_1px,#fff_1px)] bg-[length:4px_4px]";

/* ---------- first figure ---------- */

const drawMenu: Item[] = [
  { t: "&Dot", icon: "dot" },
  { t: "&Line", icon: "line" },
  { t: "&Horizontal Line", icon: "hline" },
  { t: "&Vertical Line", icon: "vline" },
  { t: "Polyline", icon: "polyline" },
  { t: "&Rectangle", icon: "rect" },
  { t: "Round Rectangle", icon: "roundrect" },
  { t: "Clipped Rectangle", icon: "clipped" },
  { t: "Circle", icon: "circle" },
  { t: "&Ellipse", icon: "ellipse" },
  { t: "&Arc", icon: "arc" },
  { t: "P&ie", icon: "pie" },
  { t: "Poly&gon", icon: "polygon" },
  "-",
  { t: "&Text", icon: "text", hot: true },
  { t: "&Picture", icon: "picture" },
  "-",
  { t: "&Scale", icon: "scale" },
  { t: "Table", icon: "table" },
];

function TextObjectDialog() {
  return (
    <div
      role="dialog"
      aria-label="Text Object"
      className="z-10 mt-[118px] w-[410px] self-start justify-self-end rounded-t-md border border-[#6b7785] bg-[#f0f0f0] font-['Liberation_Sans',sans-serif] text-[11px] leading-[14px] text-[#1c1c1c] shadow-[inset_0_0_0_4px_#e3ebf4] [grid-area:1/1]"
    >
      <div className="flex h-[25px] items-center justify-between rounded-t-md bg-linear-to-b from-[#c3d0de] to-[#dbe6f2] pr-1 pl-[6px] font-['Open_Sans',sans-serif] text-xs text-[#444]">
        Text Object
        <button aria-label="Close" className="flex h-[17px] w-[31px] items-center justify-center rounded-[2px] border border-[#8494a6]">
          <svg viewBox="0 0 12 10" className="h-[10px] w-3" aria-hidden="true">
            <path d="M2 1 10 9M10 1 2 9" stroke="#555" strokeWidth="3.600" />
            <path d="M2 1 10 9M10 1 2 9" stroke="#fff" strokeWidth="1.600" />
          </svg>
        </button>
      </div>
      <div className="px-2 pt-[6px] pb-[9px]">
        <Tabs className="h-[21px]" items={[["General", "w-[54px]"], ["Shape", "w-[43px]"], ["Visibility", "w-[47px]"]]} />
        <div className="mr-[2px] border border-[#8c8e96] bg-white pt-3 pb-4 pl-[14px]">
          <div className="flex h-[21px] items-center">
            <span className="w-[59px] pt-[2px]">Language:</span>
            <Combo label="Language" value="Language 1" className={`h-[21px] w-[128px] ${face}`} />
            <Spin label="Language" className="ml-[2px] h-[19px] w-[14px]" />
            <div className="mr-[49px] ml-auto rounded-[5px] border-[3px] border-[#ed7d31] px-[3px]">
              <Check label="Shape" checked />
            </div>
          </div>
          <div className="mt-2 flex h-[18px] items-center">
            <Check label="Use the text of the first language for all other languages" />
          </div>
          <div className="mt-2 flex h-[22px] items-start">
            <span className="w-8 pt-1">Font:</span>
            <Combo label="Font" value="Font_1" className="h-[22px] w-[274px] border border-[#c9d0d8] border-t-[#a0a6ae] bg-white font-['DejaVu_Serif',serif] text-xs font-bold text-black" />
            <Push className="h-[18px] w-4">...</Push>
          </div>
          <div className="mt-3 flex items-start">
            <div className="relative flex h-[76px] w-[299px] flex-col border border-[#c9d0d8] border-t-[#999]">
              <div className="flex min-h-0 flex-1">
                <textarea aria-label="Text" defaultValue="Received from PLC" className="min-w-0 flex-1 resize-none overflow-hidden pt-[2px] pl-[3px]" />
                <div className="flex w-[17px] justify-center bg-[#ececec] pt-[9px]">
                  <Arrow up className="text-[#999]" />
                </div>
              </div>
              <div className="flex h-[17px] items-center bg-[#ececec] pl-2">
                <svg viewBox="0 0 4 8" className="h-2 w-1" aria-hidden="true">
                  <path d="M4 0V8L0 4Z" fill="#999" />
                </svg>
              </div>
              <div className="absolute -top-[3px] -left-[5px] h-[26px] w-[106px] rounded-[5px] border-[3px] border-[#ed7d31]" />
            </div>
            <button aria-label="Text library" className={`ml-[3px] flex h-[18px] w-[17px] items-center justify-center ${face}`}>
              <Icon name="T" className="size-3" />
            </button>
          </div>
          <div className="mt-[11px] grid grid-cols-[142px_1fr] gap-y-[9px]">
            <div className="flex h-5 items-center pl-1">
              <span className="w-[38px]">Color:</span>
              <Swatch label="Color" className="h-[19px] w-[37px]" color="bg-black" />
            </div>
            <div className="pt-[2px]">
              <Check label="Transparent" checked />
            </div>
            <div className="flex h-[21px] items-center pl-1">
              <span className="w-[60px]">Alignment:</span>
              <span className="flex gap-[2px]">
                {["alignLeftDark", "alignCenter", "alignRight"].map((n) => (
                  <button key={n} aria-label={n} className="flex h-[21px] w-5 items-center justify-center rounded-[3px] border-2 border-[#54b5dd] bg-[#eaf3f8]">
                    <Icon name={n} className="size-4" />
                  </button>
                ))}
              </span>
            </div>
            <div className="pt-[2px]">
              <Check label="Edge Smoothing" />
            </div>
          </div>
          <div className="mt-3 flex items-start gap-2">
            <fieldset className="h-[110px] w-[132px] rounded-[3px] border border-[#d5dfe9] pl-[6px]">
              <legend className="px-[3px]">Direction</legend>
              {["From left to right", "From right to left", "From top to bottom", "From bottom to top"].map((t, i) => (
                <div key={t} className="flex h-[23px] items-center">
                  <Radio name="dir" label={t} checked={i === 0} />
                </div>
              ))}
            </fieldset>
            <fieldset className="h-[90px] w-[95px] rounded-[3px] border border-[#d5dfe9]">
              <legend className="ml-[5px] px-[3px]">Position</legend>
              <div className="grid grid-cols-3 justify-items-center pt-[6px] pr-[3px]">
                {Array.from({ length: 9 }, (_, i) => (
                  <div key={i} className="flex h-[22px] items-center">
                    <input type="radio" name="pos" aria-label={`Position ${i + 1}`} defaultChecked={i === 4} className={radioFace} />
                  </div>
                ))}
              </div>
            </fieldset>
            <fieldset className="h-[110px] w-[114px] rounded-[3px] border border-[#d5dfe9]">
              <legend className="ml-[5px] px-[3px]">Spacing</legend>
              <div className="flex flex-col gap-[7px] pt-[9px] pr-[11px] pl-[11px]">
                {["Border:", "Line:", "Char.:"].map((t) => (
                  <div key={t} className="flex h-5 items-center justify-between">
                    {t}
                    <NumberBox label={t} value="0" className="h-5 w-[46px]" />
                  </div>
                ))}
              </div>
            </fieldset>
          </div>
        </div>
        <div className="mt-[9px] flex h-[22px] justify-end gap-[7px]">
          <Push className="w-[76px]">OK</Push>
          <Push className="w-[76px]">Cancel</Push>
          <Push className="w-[76px]">Help</Push>
        </div>
      </div>
    </div>
  );
}

const handle = "absolute size-[6px] border border-[#3d9bf0] bg-white";

function TextFigure() {
  return (
    <section className="relative grid overflow-hidden font-['Open_Sans',sans-serif] text-xs leading-4 text-[#1b1b1b]">
      <div className="flex min-w-0 flex-col [grid-area:1/1]">
        <MenuBar pad="px-[5px]" className="h-[30px]" items={["&Draw", "&Object", "&Project", "P&anel", "&Tools", "&Window", "&Help"]} />
        <ToolRow className="h-[29px] pl-[139px]">
          <Tools size="w-[27px]" list="grayA grayA | zoomin zoomout zoomgray || off on" />
          <Combo label="State" value="" className="mt-[3px] h-[21px] w-14 shrink-0 rounded-[3px] border border-[#bbb] bg-[#f0f0f0]" arrow="text-[#999]" />
          <Spin label="State" tone="text-[#999]" className="mt-[3px] mr-px ml-[3px] h-[19px] w-[14px] shrink-0" />
          <Tools size="w-[27px]" list="screens screenUp screenFlash || run | printer help" />
        </ToolRow>
        <ToolRow className="h-[29px] pl-[149px]">
          <Tools size="w-[27px]" list="toggle hand slide || numEntry ab advNum || lamp multi | numDisplay abc | msg || meter | clock cal sun || compass draw gif photos film tools" />
        </ToolRow>
        <ToolRow className="h-[29px] pl-[100px]">
          <div className="mt-[3px] flex h-[21px] shrink-0 gap-[2px]">
            <Combo label="Font name" value="" className="w-[120px] bg-white" />
            <Combo label="Font size" value="12" className="w-[44px] bg-white" />
            <input aria-label="Caption" defaultValue="Received from PLC" className="w-[83px] bg-white pl-[2px] font-['Liberation_Sans',sans-serif] text-[11px]" />
          </div>
          <Spin label="Caption" tone="text-[#777]" className="mt-[3px] mr-[6px] h-[21px] w-[17px] shrink-0" />
          <button aria-label="Text" className={`mt-[3px] mr-[3px] flex h-5 w-[19px] shrink-0 items-center justify-center ${face}`}>
            <Icon name="T" className="size-3" />
          </button>
          <Swatch label="Text colour" className="mt-[3px] mr-[3px] h-5 w-7 shrink-0" color="bg-black" />
          <Swatch label="Fill colour" className="mt-[3px] h-5 w-7 shrink-0" color="bg-[#c6c6c6]" />
          <Tools size="w-[27px]" list="grayCircle boxW boxH || alignLeft alignCenter alignRight pages" />
        </ToolRow>
        <ToolRow className="h-7 pl-[100px]">
          <Combo label="Shape" value="" className="mt-[3px] h-[21px] w-[102px] shrink-0 rounded-[3px] border border-[#bbb] bg-[#f0f0f0]" arrow="text-[#999]" />
          <Tools size="w-[27px]" list="| wrench" />
          <PenBox className="h-5 w-7" />
          <Tools size="w-[27px]" list="| grayE grayCircle grayW" />
        </ToolRow>
        <ToolRow className="h-7 pl-[143px]">
          <Tools size="w-[27px]" list="grayB grayC grayD || gridL gridR gridU gridD |" />
        </ToolRow>
        <div className="flex flex-1">
          <div className="flex w-[105px] shrink-0">
            <div className="flex flex-1 flex-col justify-end pb-[42px] text-[11px] leading-[18px]">
              <span>p</span>
              <span>: Status</span>
            </div>
            <div className="flex w-4 flex-col justify-end bg-[#ededed] pb-[50px]">
              <div className="h-[60px] rounded-[2px] border border-[#999] bg-linear-to-r from-[#f2f2f2] to-[#cfcfcf]" />
            </div>
          </div>
          <div className="w-[6px] border-r-[3px] border-[#777] bg-[#f0f0f0]" />
          <div className="flex min-w-0 flex-1 flex-col">
            <div className="flex h-[27px] items-end border-b border-[#8c8e96] bg-[#f0f0f0]">
              <div className="-mb-px h-[22px] w-[100px] border border-b-0 border-[#8c8e96] bg-white pt-[2px] pl-[35px]">AP_1</div>
            </div>
            <div className="h-8 border-b-2 border-[#777] bg-[#f0f0f0] pt-1">
              <div className="h-[22px] w-[90px] border-r border-b-2 border-[#888] border-b-[#1010f0] bg-[#ffffc8] pt-px pr-[6px] text-right font-['Noto_Sans',sans-serif] font-bold">een 1 (#1)</div>
            </div>
            <div className={`flex-1 ${dots}`} />
          </div>
        </div>
      </div>

      <div role="menu" className="z-10 mt-[26px] flex h-[484px] w-[142px] flex-col self-start border border-[#555] bg-linear-to-r from-[#f4f4f4] from-0% via-[#bdbdbd] via-[29px] to-[#f0f0f0] to-[29px] py-px [grid-area:1/1]">
        <MenuItems items={drawMenu} sep="h-[13px]" gap="ml-2" />
      </div>

      <TextObjectDialog />

      <div className="absolute top-[376px] left-[181px] flex h-[41px] w-[154px] items-center justify-center bg-[#c6c6c6] pt-1 font-['Liberation_Sans',sans-serif] text-[13px] font-bold text-black">
        Received from PLC
        <i className={`${handle} -top-[3px] -left-[3px]`} />
        <i className={`${handle} -top-[3px] left-[74px]`} />
        <i className={`${handle} -top-[3px] -right-[3px]`} />
        <i className={`${handle} top-[17px] -left-[3px]`} />
        <i className={`${handle} top-[17px] -right-[3px]`} />
        <i className={`${handle} -bottom-[3px] -left-[3px]`} />
        <i className={`${handle} -bottom-[3px] left-[74px]`} />
        <i className={`${handle} -right-[3px] -bottom-[3px]`} />
      </div>

      <Callout
        className="top-[307px] left-[114px] z-20 h-[88px] w-[133px]"
        box="40 0 133 88"
        d="M46 0H167Q173 0 173 6V32Q173 38 167 38H95L0 88 63 38H46Q40 38 40 32V6Q40 0 46 0Z"
      />
      <Callout
        className="top-[425px] left-[158px] z-20 h-[87px] w-[192px]"
        box="0 0 192 87"
        d="M6 51H32L83 0 80 51H186Q192 51 192 57V81Q192 87 186 87H6Q0 87 0 81V57Q0 51 6 51Z"
      />
      <Callout
        className="top-[292px] right-[48px] z-20 h-[87px] w-[228px]"
        box="0 0 228 87"
        d="M79 40Q79 30 89 30H218Q228 30 228 40V77Q228 87 218 87H89Q79 87 79 77V54L0 0Z"
      />
    </section>
  );
}

/* ---------- second figure ---------- */

const objectMenu: Item[] = [
  { t: "Bit Button", icon: "bitButton" },
  { t: "Toggle Switch", icon: "toggle" },
  { t: "Screen Button", icon: "screenButton" },
  { t: "Function Button", icon: "fnButton" },
  { t: "Slide Switch", icon: "slide" },
  { t: "More buttons" },
  "-",
  { t: "Numeric Entry", icon: "numEntry" },
  { t: "Numeric Display", icon: "numDisplayHot", hot: true },
  { t: "Advanced Numeric Display", icon: "advNum" },
  { t: "Character Entry", icon: "ab" },
  { t: "Character Display", icon: "abc" },
  "-",
  { t: "Bit Lamp", icon: "lamp" },
  { t: "Multistate Lamp", icon: "multi" },
  { t: "Message Display", icon: "msg" },
  { t: "Time/Date", sub: true },
  { t: "Meter", icon: "meter" },
  { t: "Dynamic Graphic", sub: true },
  { t: "Pipeline", icon: "pipeline" },
  { t: "Graph/Chart", sub: true },
  { t: "Alarm Display", icon: "alarm" },
  { t: "Historic Display", sub: true },
  { t: "Recipe Selector", icon: "recipe" },
];

function NumericDisplayDialog() {
  return (
    <div
      role="dialog"
      aria-label="Numeric Display"
      className="z-10 mt-[27px] mr-[18px] w-[399px] self-start justify-self-end rounded-t-md border border-black bg-[#f0f0f0] font-['DejaVu_Sans_Condensed','DejaVu_Sans',sans-serif] text-[10px] leading-[14px] text-black shadow-[inset_-2px_-2px_0_#3fc8ee,inset_3px_0_0_#b9d1ea] [grid-area:1/1]"
    >
      <div className="flex h-[22px] items-center justify-between rounded-t-md bg-linear-to-b from-[#8fabc9] to-[#b9d1ea] pr-1 pl-[6px] font-['Open_Sans',sans-serif] text-[11px]">
        Numeric Display
        <button aria-label="Close" className="flex h-[15px] w-[29px] items-center justify-center rounded-[2px] border border-[#5c1c1c] bg-linear-to-b from-[#e09a8c] from-45% to-[#c0392b] to-55%">
          <svg viewBox="0 0 12 10" className="h-[9px] w-[11px]" aria-hidden="true">
            <path d="M2 1 10 9M10 1 2 9" stroke="#533" strokeWidth="3.600" />
            <path d="M2 1 10 9M10 1 2 9" stroke="#fff" strokeWidth="2" />
          </svg>
        </button>
      </div>
      <div className="pt-[7px] pr-[9px] pb-[10px] pl-2">
        <Tabs className="h-[19px]" items={[["General", "w-[49px]"], ["Advanced", "w-[55px]"], ["Visibility", "w-[44px]"]]} />
        <div className="border border-[#8c8e96] bg-white pt-[11px] pb-[131px] pl-3">
          <div className="flex h-[19px] items-center">
            <label htmlFor="nd-id" className="w-[18px] pt-[2px]">ID:</label>
            <input id="nd-id" defaultValue="ND0000" className="h-[19px] w-20 border border-[#a9a9a9] pl-[2px] text-[#777]" />
            <label htmlFor="nd-note" className="ml-[6px] w-[30px] pt-[2px]">Note:</label>
            <input id="nd-note" className="h-[19px] w-[171px] border border-[#d9dde4]" />
          </div>
          <div className="mt-[9px] flex gap-[9px]">
            <div className="h-24 w-[134px] border-t border-l border-[#888] pt-[2px] pl-px">
              <div className="mr-[2px] flex h-[92px] flex-col items-center bg-[#6d6d6d] pt-[19px]">
                <div className="h-[54px] w-[92px] bg-[#c6c6c6]" />
                <span className="mt-[2px]">NO_BDR</span>
              </div>
            </div>
            <div>
              <div className="h-[14px]">
                <Check label="Transparent Background" />
              </div>
              <div className="mt-[9px] flex items-center gap-[23px]">
                <Push className="h-5 w-[53px]">Shape...</Push>
                <Check label="External Label" />
              </div>
              <div className="mt-[9px] flex items-center">
                <span className="w-[70px]">Border Color:</span>
                <Swatch label="Border color" className="h-[19px] w-[46px]" color="bg-white" />
              </div>
              <div className="mt-[5px] flex items-center">
                <span className="w-[70px]">BG Color:</span>
                <Swatch label="Background color" className="h-[19px] w-[46px]" color="bg-[#c6c6c6]" />
              </div>
            </div>
          </div>
          <div className="mt-3 flex items-center">
            <span className="w-[69px]">Data Type:</span>
            <Combo label="Data type" value="16-Bit Unsigned Integer" className={`h-5 w-[206px] ${face}`} />
          </div>
          <div className="mt-2 flex items-center">
            <span className="w-[69px]">Display Type:</span>
            <Combo label="Display type" value="16-Bit Unsigned Decimal" className={`h-5 w-[206px] ${face}`} />
          </div>
          <div className="mt-2 flex items-center">
            <label htmlFor="nd-addr" className="w-[83px]">Monitor Address:</label>
            <span className="flex h-[19px] w-[168px] items-center border border-[#b5cfe7] border-t-[#3d7bad]">
              <input id="nd-addr" defaultValue="MW0_11" className="w-full pl-[2px] text-[11px]" />
            </span>
            <button aria-label="Keypad" className={`ml-[2px] flex h-[17px] w-[15px] items-center justify-center ${face}`}>
              <Icon name="keypad" className="size-[13px]" />
            </button>
            <button aria-label="Tag" className={`ml-[2px] flex h-[17px] w-[15px] items-center justify-center ${face}`}>
              <Icon name="tag" className="size-[13px]" />
            </button>
          </div>
          <div className="mt-2 flex items-start">
            <span className="w-[29px] pt-[3px]">Font:</span>
            <Combo label="Font" value="Font_1" className="h-[21px] w-[222px] border border-[#d0d6de] border-t-[#999] bg-white font-['DejaVu_Serif',serif] text-[11px] font-bold text-black" />
            <Push className="mt-px ml-px h-[17px] w-[15px]">...</Push>
          </div>
          <div className="mt-[5px] flex">
            <div className="w-32 shrink-0 pt-[6px]">
              <div className="flex items-center">
                <span className="w-14">Text Color:</span>
                <Swatch label="Text color" className="h-5 w-[46px]" color="bg-black" />
              </div>
              <div className="mt-[9px] flex items-center">
                <span className="w-[61px]">Total Digits:</span>
                <NumberBox label="Total digits" value="4" className="h-[19px] w-[39px]" />
              </div>
              <div className="mt-[6px] flex items-center whitespace-nowrap">
                <span className="w-20">Fractional Digits:</span>
                <NumberBox label="Fractional digits" value="0" className="h-[19px] w-10" />
              </div>
            </div>
            <fieldset className="h-20 w-[68px] rounded-[3px] border border-[#d5dfe9] pl-2">
              <legend className="-ml-[2px] px-[2px]">Alignment</legend>
              <div className="flex flex-col gap-px pt-[3px]">
                {["Left", "Center", "Right"].map((t) => (
                  <div key={t} className="flex h-[18px] items-center">
                    <Radio name="al" label={t} checked={t === "Center"} />
                  </div>
                ))}
              </div>
            </fieldset>
            <fieldset className="ml-[7px] h-20 w-[106px] rounded-[3px] border border-[#d5dfe9] pl-[6px]">
              <legend className="px-[2px]">Justification</legend>
              <div className="flex flex-col gap-px pt-[3px]">
                {["Zero Suppress", "Leading Zeros", "Leading Spaces"].map((t, i) => (
                  <div key={t} className="flex h-[18px] items-center">
                    <Radio name="ju" label={t} checked={i === 0} />
                  </div>
                ))}
              </div>
            </fieldset>
          </div>
        </div>
        <div className="mt-2 flex h-[19px] justify-end gap-2">
          <Push className="w-[68px] border-[#2f8fc0]! shadow-[inset_0_0_0_1px_#46d3f5]">OK</Push>
          <Push className="w-[68px]">Cancel</Push>
          <Push className="w-[68px]">Help</Push>
        </div>
      </div>
    </div>
  );
}

function NumericFigure() {
  return (
    <section className="relative -ml-px mt-[106px] grid overflow-hidden font-['Open_Sans',sans-serif] text-[11px] leading-[14px] text-[#111]">
      <div className="flex min-w-0 flex-col [grid-area:1/1]">
        <MenuBar pad="px-[5px]" className="h-7 pl-1" items={["&Object", "&Project", "P&anel", "&Tools", "&Window", "&Help"]} />
        <ToolRow className="h-[26px] pl-[198px]">
          <Tools size="w-[25px]" list="zoomgray || off on" />
          <Combo label="State" value="" className="mt-[3px] h-5 w-[51px] shrink-0 rounded-[3px] border border-[#bbb] bg-[#f0f0f0]" arrow="text-[#999]" />
          <Spin label="State" tone="text-[#999]" className="mt-[3px] ml-[2px] h-[18px] w-[13px] shrink-0" />
        </ToolRow>
        <ToolRow className="h-[27px] justify-between pl-[186px]">
          <div className="flex items-center">
            <Tools size="w-[25px]" list="numEntry ab advNum | lamp multi | numDisplay" />
          </div>
          <Tools size="w-[25px]" list="net" />
        </ToolRow>
        <ToolRow className="h-[26px] pl-[150px]">
          <Combo label="Font name" value="" className="mt-[3px] h-5 w-[60px] shrink-0 bg-white" arrow="text-[#999]" />
          <input aria-label="Caption" className="mt-[3px] h-5 w-[79px] shrink-0 border border-[#bbb] bg-[#ececec]" />
          <Spin label="Caption" tone="text-[#777]" className="mt-[3px] mr-1 h-5 w-[13px] shrink-0" />
          <button aria-label="Fill" className="mt-[3px] mr-[3px] h-[19px] w-[18px] shrink-0 rounded-[3px] border border-[#aaa] bg-[#f0f0f0]" />
          <PenBox className="h-[19px] w-6" />
        </ToolRow>
        <ToolRow className="h-[27px] pl-[179px]">
          <PenBox className="h-[19px] w-[30px]" />
          <Tools size="w-[26px]" list="| grayE grayCircle grayW grayH |" />
          <PenBox className="h-[19px] w-6" />
        </ToolRow>
        <ToolRow className="h-[27px] pl-[286px]">
          <Tools size="w-[25px]" list="graySq graySq graySq" />
        </ToolRow>
        <div className="flex flex-1">
          <div className="flex w-1 flex-col">
            <div className="h-5 bg-[#99b4d6]" />
          </div>
          <div className="flex flex-1 flex-col">
            <div className="h-[22px] border-b border-[#8c8e96] bg-[#f0f0f0]" />
            <div className="mt-[3px] h-[27px] border-b-2 border-[#777] bg-[#f0f0f0]" />
            <div className={`flex-1 ${dots}`} />
          </div>
        </div>
      </div>

      <div role="menu" className="z-10 mt-[25px] ml-1 flex h-[562px] w-[190px] self-start border border-b-0 border-[#555] bg-linear-to-r from-[#f4f4f4] from-0% via-[#bdbdbd] via-[26px] to-[#f0f0f0] to-[26px] [grid-area:1/1]">
        <div className="flex min-w-0 flex-1 flex-col">
          <MenuItems items={objectMenu} sep="h-3" gap="ml-[5px]" />
        </div>
        <div className="flex w-[15px] flex-col border-l border-[#aaa] bg-[#ececec]">
          <div className="flex h-[18px] items-center justify-center">
            <Arrow up className="scale-75 text-[#444]" />
          </div>
          <div className="flex flex-1 flex-col items-center justify-center rounded-t-[2px] border border-b-0 border-[#999] bg-linear-to-r from-[#f2f2f2] to-[#c4c8d0]">
            <svg viewBox="0 0 7 8" className="h-2 w-[7px]" aria-hidden="true">
              <path d="M0 1H7M0 4H7M0 7H7" stroke="#555" />
            </svg>
          </div>
        </div>
      </div>

      <NumericDisplayDialog />

      <div className="absolute top-[310px] left-[194px] flex h-[38px] w-[134px] items-center bg-[#c6c6c6] pt-1 pl-[9px] font-['Liberation_Sans',sans-serif] text-xs font-bold text-black">
        Received from PLC
      </div>
      <div className="absolute top-[382px] left-[228px] flex size-[47px] items-center justify-center bg-[#c6c6c6] pt-1 font-['Liberation_Sans',sans-serif] text-xs font-bold text-black">
        9999
      </div>

      <Callout
        className="top-[126px] left-[139px] z-20 h-24 w-[151px]"
        box="0 0 151 96"
        d="M9 0H142Q151 0 151 9V47Q151 56 142 56H63L6 96 25 56H9Q0 56 0 47V9Q0 0 9 0Z"
      />
      <Callout
        className="top-[201px] right-px z-20 h-[81px] w-36"
        box="0 0 144 81"
        d="M9 0H135Q144 0 144 9V47Q144 56 135 56H59L10 81 24 56H9Q0 56 0 47V9Q0 0 9 0Z"
      />
      <Callout
        className="top-[428px] left-[216px] z-20 h-[79px] w-[131px]"
        box="0 0 131 79"
        d="M8 28H22L31 0 54 28H123Q131 28 131 36V71Q131 79 123 79H8Q0 79 0 71V36Q0 28 8 28Z"
      />
    </section>
  );
}

export default function App() {
  return (
    <div className="bg-white">
      <main className="pt-[160px] pr-[214px] pl-[212px]">
        <TextFigure />
        <div className="pt-px">
          <NumericFigure />
        </div>
      </main>
      <hr className="mt-[142px] mr-[112px] ml-[111px] border-black" />
      <hr className="mt-[97px] mr-[115px] border-black" />
    </div>
  );
}
